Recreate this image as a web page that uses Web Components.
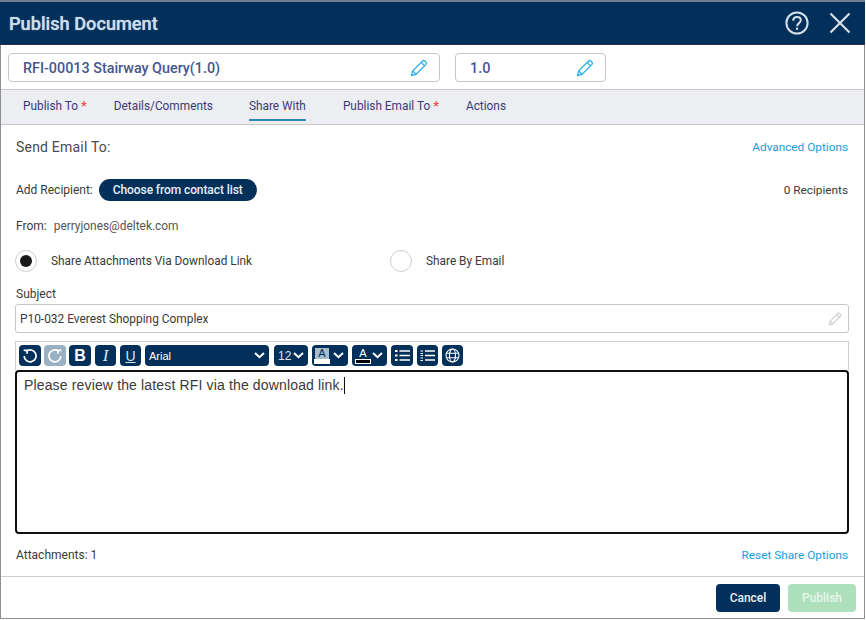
<!DOCTYPE html>
<html>
<head>
<meta charset="utf-8">
<title>Publish Document</title>
<style>
  html, body { margin: 0; padding: 0; background: #fff; }
  body { font-family: Roboto, "Liberation Sans", sans-serif; width: 866px; height: 620px; overflow: hidden; }
</style>
</head>
<body>
<publish-dialog></publish-dialog>
<script>
const PENCIL = (c) => `<svg width="18" height="18" viewBox="0 0 18 18" fill="none" stroke="${c}" stroke-width="1.3" stroke-linejoin="round"><path d="M1.5 16.5l1.2-4.6L12.6 2a1.6 1.6 0 0 1 2.2 0l1.2 1.2a1.6 1.6 0 0 1 0 2.2L6.1 15.3z"/><path d="M11.2 3.4l3.4 3.4M2.7 11.9l3.4 3.4"/></svg>`;

class PdHeader extends HTMLElement {
  constructor() {
    super();
    this.shadow = this.attachShadow({ mode: "open" });
  }
  connectedCallback() {
    this.shadow.innerHTML = `
      <style>
        :host { display: flex; align-items: center; height: 42px; background: #03305a; color: #cfdde9; padding: 0 9px; box-shadow: 0 -2px 0 #6f7f8d; flex-shrink: 0; border-bottom: 1px solid #26323d; box-sizing: content-box; }
        .t { font-size: 18.2px; font-weight: 500; flex: 1; text-shadow: 0 0 1px #9fc0dc; }
        svg { display: block; }
        .help { margin-right: 20px; margin-left: -1px; }
        .close { margin-right: 5px; }
      </style>
      <div class="t"><slot></slot></div>
      <svg class="help" width="24" height="24" viewBox="0 0 24 24" fill="none" stroke="#d5e0e9" stroke-width="2"><circle cx="12" cy="12" r="10.6"/><path d="M8.2 9.8c0-2.3 1.7-3.8 3.9-3.8s3.7 1.4 3.7 3.3c0 2.7-3.7 3-3.7 5.9"/><path d="M12.1 16.6v2.3"/></svg>
      <svg class="close" width="22" height="22" viewBox="0 0 22 22" fill="none" stroke="#d5e0e9" stroke-width="2.2"><path d="M1.5 1.5l19 19M20.5 1.5l-19 19"/></svg>`;
  }
}
customElements.define("pd-header", PdHeader);

class PdField extends HTMLElement {
  constructor() {
    super();
    this.shadow = this.attachShadow({ mode: "open" });
  }
  connectedCallback() {
    this.shadow.innerHTML = `
      <style>
        :host { display: flex; align-items: center; box-sizing: border-box; height: 29px; border: 1px solid #c6c6c6; border-radius: 4px; background: #fff; padding: 0 11px 0 14px; color: #47558f; font-size: 14.35px; font-weight: 500; }
        span { flex: 1; white-space: nowrap; padding-top: 2px; }
        svg { display: block; }
      </style>
      <span><slot></slot></span>${PENCIL("#2ab0ec")}`;
  }
}
customElements.define("pd-field", PdField);

class PdTabs extends HTMLElement {
  constructor() {
    super();
    this.shadow = this.attachShadow({ mode: "open" });
  }
  renderTab(t) {
    return `<div class="tab ${t.on ? "on" : ""}" style="margin-right:${t.gap}px">${t.label}${t.req ? '<b>*</b>' : ''}</div>`;
  }
  connectedCallback() {
    const tabs = [
      { label: "Publish To", req: true, gap: 27 },
      { label: "Details/Comments", gap: 36 },
      { label: "Share With", on: true, gap: 37 },
      { label: "Publish Email To", req: true, gap: 27 },
      { label: "Actions", gap: 0 }
    ];
    this.shadow.innerHTML = `
      <style>
        :host { display: flex; box-sizing: border-box; height: 36px; background: #eceef2; border-top: 1px solid #c8c8c8; border-bottom: 1px solid #c8c8c8; padding-left: 22px; flex-shrink: 0; }
        .tab { box-sizing: border-box; height: 31px; line-height: 32px; font-size: 11.85px; color: #3e3a77; white-space: nowrap; border-bottom: 2px solid transparent; }
        .tab.on { border-bottom-color: #2a8abc; }
        b { color: #f0484f; font-weight: 500; margin-left: 3px; font-size: 13px; line-height: 0; }
      </style>
      ${tabs.map((t) => this.renderTab(t)).join("")}`;
  }
}
customElements.define("pd-tabs", PdTabs);

class PdRadio extends HTMLElement {
  constructor() {
    super();
    this.shadow = this.attachShadow({ mode: "open" });
  }
  connectedCallback() {
    this.shadow.innerHTML = `
      <style>
        :host { display: flex; align-items: center; font-size: 11.85px; color: #3a3a3a; }
        .c { box-sizing: border-box; width: 22px; height: 22px; border: 1px solid #cfcfcf; border-radius: 50%; margin-right: 14px; display: flex; align-items: center; justify-content: center; }
        :host([checked]) .c::after { content: ""; width: 12px; height: 12px; border-radius: 50%; background: #1a1a1a; }
      </style>
      <div class="c"></div><slot></slot>`;
  }
}
customElements.define("pd-radio", PdRadio);

class PdToolbar extends HTMLElement {
  constructor() {
    super();
    this.shadow = this.attachShadow({ mode: "open" });
  }
  connectedCallback() {
    const chev = `<svg class="chev" width="11" height="7" viewBox="0 0 11 7" fill="none" stroke="#fff" stroke-width="2"><path d="M1 1l4.5 4.2L10 1"/></svg>`;
    this.shadow.innerHTML = `
      <style>
        :host { display: flex; align-items: flex-start; box-sizing: border-box; height: 29px; border: 1px solid #cfcfcf; border-bottom: 0; padding: 3px 0 0 3px; gap: 4px; background: #fff; }
        .b { box-sizing: border-box; height: 21px; width: 21px; background: #03305a; border-radius: 4px; color: #fff; display: flex; align-items: center; justify-content: center; font-family: "Liberation Sans", sans-serif; flex-shrink: 0; }
        .dis { background: #9ab0c3; }
        .w { justify-content: space-between; padding: 0 4px; font-size: 11px; }
        svg { display: block; }
        .bold { font-weight: 700; font-size: 16px; width: 22px; }
        .it { font-style: italic; font-size: 17px; font-family: "Liberation Serif", serif; color: #dbe5ee; }
        .un { text-decoration: underline; font-size: 14px; color: #dbe5ee; }
        .sw { display: flex; flex-direction: column; align-items: center; width: 16px; line-height: 11px; font-size: 11px; }
        .sw span { display: block; width: 14px; text-align: center; }
        .sw i { display: block; width: 16px; height: 5px; }
      </style>
      <div class="b" style="width:22px"><svg width="16" height="16" viewBox="0 0 15 15" fill="none" stroke="#fff" stroke-width="1.6"><path d="M4 3.1A5.6 5.6 0 1 1 2 7.5"/><path d="M1.6 2.2h3.2v3.2"/></svg></div>
      <div class="b dis" style="width:22px;margin-left:-1px"><svg width="16" height="16" viewBox="0 0 15 15" fill="none" stroke="#fff" stroke-width="1.6"><path d="M11 3.1A5.6 5.6 0 1 0 13 7.5"/><path d="M13.4 2.2h-3.2v3.2"/></svg></div>
      <div class="b bold" style="margin-left:-1px">B</div>
      <div class="b it">I</div>
      <div class="b un">U</div>
      <div class="b w" style="width:124px"><span>Arial</span>${chev}</div>
      <div class="b w" style="width:34px;margin-left:1px;font-size:12px;color:#d8e3ec"><span>12</span>${chev}</div>
      <div class="b w" style="width:36px;padding:0 4px 0 2px"><div class="sw"><span style="background:#a9bccc;color:#03305a">A</span><i style="background:#fff"></i></div>${chev}</div>
      <div class="b w" style="width:35px;padding:0 4px 0 3px"><div class="sw"><span>A</span><i style="background:#000;border:1px solid #fff;box-sizing:border-box"></i></div>${chev}</div>
      <div class="b" style="width:22px"><svg width="15" height="13" viewBox="0 0 15 13" fill="none" stroke="#fff" stroke-width="1.5"><path d="M4.5 2H15M4.5 6.5H15M4.5 11H15"/><path d="M0 2h2.5M0 6.5h2.5M0 11h2.5" stroke-width="2.2"/></svg></div>
      <div class="b"><svg width="15" height="13" viewBox="0 0 15 13" fill="none" stroke="#fff" stroke-width="1.5"><path d="M5 2h10M5 6.5h10M5 11h10"/><path d="M.5 2h2.5M.5 4.5h2.5M.5 6.5h2.5M.5 9h2.5M.5 11.5h2.5" stroke-width="1"/></svg></div>
      <div class="b"><svg width="15" height="15" viewBox="0 0 15 15" fill="none" stroke="#fff" stroke-width="1.1"><circle cx="7.5" cy="7.5" r="6.5"/><ellipse cx="7.5" cy="7.5" rx="3" ry="6.5"/><path d="M1 5.2h13M1 9.8h13"/></svg></div>`;
  }
}
customElements.define("pd-toolbar", PdToolbar);

class PublishDialog extends HTMLElement {
  constructor() {
    super();
    this.shadow = this.attachShadow({ mode: "open" });
  }
  renderStyle() {
    return `
      <style>
        :host { display: flex; flex-direction: column; box-sizing: border-box; width: 866px; height: 620px; padding: 2px 1px 1px 0; font-family: Roboto, "Liberation Sans", sans-serif; color: #3a3a3a; }
        .frame { flex: 1; display: flex; flex-direction: column; min-height: 0; border: 1px solid #8f8f8f; border-width: 0 1px 1px 1px; }
        .titles { display: flex; height: 44px; box-sizing: border-box; padding: 8px 0 0 7px; gap: 15px; flex-shrink: 0; }
        .body { flex: 1; display: flex; flex-direction: column; padding: 0 15px 0 14px; min-height: 0; font-size: 12px; }
        .row { display: flex; align-items: center; flex-shrink: 0; }
        .sp { flex: 1; }
        .in { padding-left: 1px; }
        .send { height: 44px; }
        .send span { font-size: 14px; color: #4a4a4a; letter-spacing: .2px; }
        a { color: #1a9bdc; font-size: 11.8px; text-decoration: none; margin-right: 1px; }
        .add { height: 38px; margin-top: 2px; }
        .pill { background: #03305a; color: #e8eff5; font-size: 12px; font-weight: 500; height: 22px; line-height: 22px; border-radius: 11px; padding: 0 14px; margin-left: 6px; letter-spacing: -.09px; }
        .count { font-size: 11.8px; margin-right: 1px; }
        .from { height: 28px; margin-top: 3px; }
        .from span { margin-left: 7px; color: #555; font-size: 11.9px; }
        .radios { height: 30px; margin-top: 6px; }
        .subject-l { height: 16px; margin-top: 10px; margin-bottom: 2px; }
        .subject { box-sizing: border-box; height: 29px; border: 1px solid #c6c6c6; border-radius: 3px; padding: 0 6px 0 4px; color: #3a3a3a; font-size: 11.9px; }
        .tb { margin-top: 8px; flex-shrink: 0; }
        .editor { box-sizing: border-box; height: 164px; flex-shrink: 0; border: 2px solid #111; border-radius: 4px; padding: 4px 7px; font-family: "Liberation Sans", sans-serif; font-size: 14px; line-height: 18px; color: #3a3a3a; letter-spacing: .15px; }
        .editor i { display: inline-block; width: 1px; height: 17px; background: #111; vertical-align: -4px; }
        .att { height: 40px; padding-top: 1px; box-sizing: border-box; }
        .foot { display: flex; justify-content: flex-end; align-items: center; gap: 8px; height: 42px; border-top: 1px solid #cfcfcf; padding-right: 8px; flex-shrink: 0; box-sizing: border-box; }
        .btn { box-sizing: border-box; height: 28px; line-height: 28px; border-radius: 4px; text-align: center; font-size: 12px; font-weight: 500; }
        .cancel { width: 64px; background: #03305a; color: #e8eff5; }
        .publish { width: 68px; background: #aee0bd; color: #e6f6ea; }
      </style>`;
  }
  connectedCallback() {
    this.shadow.innerHTML = `
      ${this.renderStyle()}
      <pd-header>Publish Document</pd-header>
      <div class="frame">
        <div class="titles">
          <pd-field style="width:432px">RFI-00013 Stairway Query(1.0)</pd-field>
          <pd-field style="width:151px">1.0</pd-field>
        </div>
        <pd-tabs></pd-tabs>
        <div class="body">
          <div class="row send in"><span>Send Email To:</span><div class="sp"></div><a>Advanced Options</a></div>
          <div class="row add in">Add Recipient:<div class="pill">Choose from contact list</div><div class="sp"></div><div class="count">0 Recipients</div></div>
          <div class="row from in">From:<span>perryjones@deltek.com</span></div>
          <div class="row radios"><pd-radio checked style="width:375px">Share Attachments Via Download Link</pd-radio><pd-radio>Share By Email</pd-radio></div>
          <div class="row subject-l in">Subject</div>
          <div class="row subject"><span>P10-032 Everest Shopping Complex</span><div class="sp"></div>${PENCIL("#c9c9c9").replace('width="18" height="18"', 'width="14" height="14"')}</div>
          <pd-toolbar class="tb"></pd-toolbar>
          <div class="editor">Please review the latest RFI via the download link.<i></i></div>
          <div class="row att in"><span>Attachments: 1</span><div class="sp"></div><a>Reset Share Options</a></div>
        </div>
        <div class="foot"><div class="btn cancel">Cancel</div><div class="btn publish">Publish</div></div>
      </div>`;
  }
}
customElements.define("publish-dialog", PublishDialog);
</script>
</body>
</html>
